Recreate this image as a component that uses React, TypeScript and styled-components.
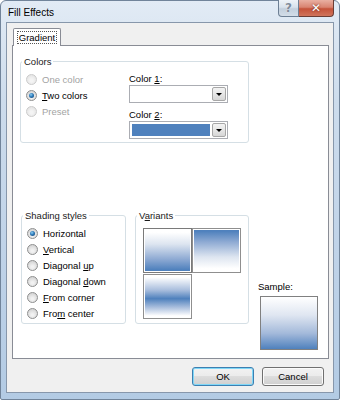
import styled, { createGlobalStyle, css } from 'styled-components';

const BLUE = '#4f81bd';

const GlobalStyle = createGlobalStyle`
  html, body { margin: 0; padding: 0; background: #fff; }
  body {
    font-family: "Liberation Sans", Arial, sans-serif;
    font-size: 9.5px;
    color: #000;
  }
  * { box-sizing: border-box; }
`;

const Window = styled.div`
  width: 340px;
  height: 400px;
  border: 1px solid #71849a;
  border-radius: 6px 6px 2px 2px;
  background: linear-gradient(180deg, #e2ebf5 0%, #cddcec 25%, #bdd1e7 70%, #b3cbe4 100%);
  display: flex;
  flex-direction: column;
`;

const TitleBar = styled.div`
  height: 21px;
  display: flex;
  align-items: flex-start;
`;

const Title = styled.div`
  padding-left: 7px;
  line-height: 24px;
  font-size: 10px;
  color: #000;
  flex: 1;
`;

const CaptionButton = styled.div<{ $close?: boolean }>`
  margin-top: -1px;
  height: 17px;
  width: ${p => (p.$close ? 35 : 21)}px;
  border: 1px solid ${p => (p.$close ? '#6b3d35' : '#6d7f94')};
  border-top: none;
  display: flex;
  align-items: center;
  justify-content: center;
  font-weight: bold;
  font-family: "DejaVu Sans", sans-serif;
  ${p =>
    p.$close
      ? css`
          margin-right: 5px;
          border-left: none;
          border-radius: 0 0 4px 0;
          background: linear-gradient(180deg, #e9b0a2 0%, #d98471 45%, #c5533a 55%, #d0745c 100%);
          color: #fff;
          font-size: 12px;
          text-shadow: 0 0 2px #5a1a10;
        `
      : css`
          border-radius: 0 0 0 4px;
          background: linear-gradient(180deg, #eef3f8 0%, #d8e2ec 45%, #c2cfdd 55%, #d3dde8 100%);
          color: #7f8b9a;
          font-size: 12px;
          text-shadow: 0 0 1px #fff;
        `}
`;

const Client = styled.div`
  margin: 0 5px;
  height: 371px;
  border: 1px solid #8797ab;
  background: #f0f0f0;
  padding: 5px 4px 0 5px;
  display: flex;
  flex-direction: column;
`;

const TabStrip = styled.div`
  display: flex;
  height: 18px;
  position: relative;
  z-index: 1;
  margin-bottom: -1px;
`;

const Tab = styled.div`
  margin-left: 1px;
  width: 48px;
  height: 18px;
  border: 1px solid #898c95;
  border-bottom: none;
  border-radius: 2px 2px 0 0;
  background: #fff;
  display: flex;
  align-items: center;
  justify-content: center;
`;

const FocusLabel = styled.span`
  border: 1px dotted #555;
  padding: 0 1px;
  line-height: 11px;
`;

const Panel = styled.div`
  height: 314px;
  border: 1px solid #898c95;
  background: #fff;
  padding: 10px 0 0 7px;
`;

const Group = styled.fieldset<{ $w: number; $h: number }>`
  margin: 0;
  padding: 0;
  width: ${p => p.$w}px;
  height: ${p => p.$h}px;
  border: 1px solid #d5dfe5;
  border-radius: 3px;
  min-width: 0;
`;

const Legend = styled.legend`
  margin-left: 1px;
  padding: 0 2px;
  line-height: 11px;
  color: #1a1a1a;
`;

const ColorsBody = styled.div`
  display: flex;
  padding-top: 4px;
`;

const RadioColumn = styled.div`
  width: 108px;
  padding-left: 5px;
  display: flex;
  flex-direction: column;
`;

const RadioRow = styled.label<{ $disabled?: boolean }>`
  height: 16px;
  display: flex;
  align-items: center;
  gap: 5px;
  color: ${p => (p.$disabled ? '#a3a3a3' : '#000')};
`;

const RadioDot = styled.span<{ $checked?: boolean; $disabled?: boolean }>`
  width: 11px;
  height: 11px;
  flex: none;
  border-radius: 50%;
  border: 1px solid ${p => (p.$disabled ? '#cbcbcb' : '#8e8f8f')};
  background: ${p =>
    p.$disabled
      ? 'radial-gradient(circle at 50% 60%, #f4f4f4 20%, #dedede 100%)'
      : 'radial-gradient(circle at 50% 65%, #f2f2f2 15%, #c9c9c9 100%)'};
  position: relative;
  ${p =>
    p.$checked &&
    css`
      &::after {
        content: '';
        position: absolute;
        inset: 2px;
        border-radius: 50%;
        background: radial-gradient(circle at 40% 35%, #8fd0f5 0%, #2c79b8 45%, #0f3d6b 100%);
      }
    `}
`;

const ComboColumn = styled.div`
  display: flex;
  flex-direction: column;
`;

const FieldLabel = styled.div<{ $top: number }>`
  margin-top: ${p => p.$top}px;
  line-height: 11px;
`;

const Combo = styled.div`
  margin-top: 1px;
  width: 99px;
  height: 18px;
  border: 1px solid #abadb3;
  background: #fff;
  display: flex;
  padding: 1px;
`;

const Swatch = styled.div<{ $color?: string }>`
  flex: 1;
  margin: 1px 2px 1px 1px;
  background: ${p => p.$color ?? '#fff'};
`;

const DropButton = styled.div`
  width: 14px;
  border: 1px solid #a7a7a7;
  border-radius: 2px;
  background: linear-gradient(180deg, #f3f3f3 0%, #e6e6e6 50%, #d6d6d6 100%);
  display: flex;
  align-items: center;
  justify-content: center;
  &::after {
    content: '';
    border-left: 3px solid transparent;
    border-right: 3px solid transparent;
    border-top: 3px solid #000;
  }
`;

const BottomRow = styled.div`
  margin-top: 67px;
  margin-left: 1px;
  display: flex;
  align-items: flex-start;
`;

const ShadingBody = styled.div`
  padding: 4px 0 0 5px;
`;

const VariantsGroup = styled(Group)`
  margin-left: 9px;
`;

const VariantGrid = styled.div`
  padding: 7px 0 0 7px;
  display: grid;
  grid-template-columns: 49px 49px;
  grid-auto-rows: 45px;
  gap: 1px 0;
`;

const Tile = styled.div<{ $bg: string; $selected?: boolean }>`
  border: 1px solid ${p => (p.$selected ? '#7a7a7a' : '#8f8f8f')};
  box-shadow: inset 0 0 0 1px #fff;
  background: ${p => p.$bg};
`;

const SampleColumn = styled.div`
  margin: 71px 0 0 9px;
  display: flex;
  flex-direction: column;
`;

const SampleBox = styled.div`
  margin: 4px 0 0 2px;
  width: 58px;
  height: 54px;
  border: 1px solid #808080;
  background: linear-gradient(180deg, #ffffff 0%, #dfe6f1 35%, #a3b9da 70%, ${BLUE} 100%);
`;

const ButtonRow = styled.div`
  margin-top: 8px;
  padding-right: 5px;
  display: flex;
  justify-content: flex-end;
  gap: 8px;
`;

const Button = styled.button<{ $default?: boolean }>`
  width: 62px;
  height: 19px;
  padding: 0;
  font: inherit;
  color: #000;
  border-radius: 3px;
  border: 1px solid ${p => (p.$default ? '#3c7fb1' : '#707070')};
  box-shadow: inset 0 0 0 1px ${p => (p.$default ? '#7fd7f7' : '#fbfbfb')};
  background: linear-gradient(180deg, #f2f2f2 0%, #ebebeb 50%, #dddddd 50%, #cfcfcf 100%);
`;

const U = styled.span`
  text-decoration: underline;
`;

const gradTop = `linear-gradient(180deg, #ffffff 8%, #dde5f0 35%, #8eaad3 70%, ${BLUE} 95%)`;
const gradBottom = `linear-gradient(0deg, #ffffff 8%, #dde5f0 35%, #8eaad3 70%, ${BLUE} 95%)`;
const gradMid = `linear-gradient(180deg, #ffffff 5%, #a9bedd 35%, ${BLUE} 55%, #a9bedd 75%, #ffffff 95%)`;

const shading = [
  { key: 'h', label: <>Horizontal</>, checked: true },
  { key: 'v', label: <><U>V</U>ertical</> },
  { key: 'du', label: <>Diagonal <U>u</U>p</> },
  { key: 'dd', label: <>Diagonal <U>d</U>own</> },
  { key: 'fc', label: <><U>F</U>rom corner</> },
  { key: 'fm', label: <>Fro<U>m</U> center</> },
];

export default function App() {
  return (
    <>
      <GlobalStyle />
      <Window>
        <TitleBar>
          <Title>Fill Effects</Title>
          <CaptionButton>?</CaptionButton>
          <CaptionButton $close>✕</CaptionButton>
        </TitleBar>
        <Client>
          <TabStrip>
            <Tab>
              <FocusLabel>Gradient</FocusLabel>
            </Tab>
          </TabStrip>
          <Panel>
            <Group $w={229} $h={87}>
              <Legend>Colors</Legend>
              <ColorsBody>
                <RadioColumn>
                  <RadioRow $disabled>
                    <RadioDot $disabled />
                    One color
                  </RadioRow>
                  <RadioRow>
                    <RadioDot $checked />
                    <span><U>T</U>wo colors</span>
                  </RadioRow>
                  <RadioRow $disabled>
                    <RadioDot $disabled />
                    Preset
                  </RadioRow>
                </RadioColumn>
                <ComboColumn>
                  <FieldLabel $top={2}>Color <U>1</U>:</FieldLabel>
                  <Combo>
                    <Swatch />
                    <DropButton />
                  </Combo>
                  <FieldLabel $top={6}>Color <U>2</U>:</FieldLabel>
                  <Combo>
                    <Swatch $color={BLUE} />
                    <DropButton />
                  </Combo>
                </ComboColumn>
              </ColorsBody>
            </Group>

            <BottomRow>
              <Group $w={105} $h={114}>
                <Legend>Shading styles</Legend>
                <ShadingBody>
                  {shading.map(s => (
                    <RadioRow key={s.key}>
                      <RadioDot $checked={s.checked} />
                      <span>{s.label}</span>
                    </RadioRow>
                  ))}
                </ShadingBody>
              </Group>
              <VariantsGroup $w={114} $h={114}>
                <Legend>V<U>a</U>riants</Legend>
                <VariantGrid>
                  <Tile $bg={gradTop} $selected />
                  <Tile $bg={gradBottom} />
                  <Tile $bg={gradMid} />
                </VariantGrid>
              </VariantsGroup>
              <SampleColumn>
                <div>Sample:</div>
                <SampleBox />
              </SampleColumn>
            </BottomRow>
          </Panel>
          <ButtonRow>
            <Button $default>OK</Button>
            <Button>Cancel</Button>
          </ButtonRow>
        </Client>
      </Window>
    </>
  );
}
